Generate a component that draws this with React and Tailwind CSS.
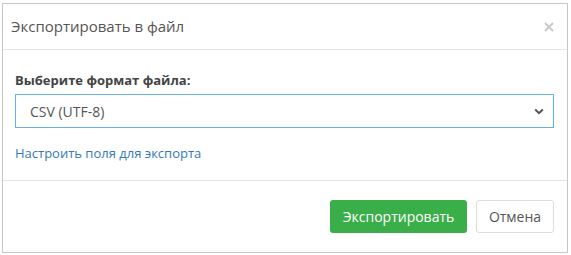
import React from "react";

export default function App() {
  return (
    <div className="w-[571px] h-[255px] bg-white pt-[3px] pl-[2px]" style={{ fontFamily: '"Open Sans", sans-serif' }}>
      <div className="w-[566px] h-[250px] border border-[#c6c6c6] flex flex-col bg-white">
        <div className="h-[46px] flex items-center justify-between pl-[8px] pr-[12px] border-b border-[#e5e5e5]">
          <div className="text-[15px] text-[#555]">Экспортировать в файл</div>
          <svg width="10" height="10" viewBox="0 0 10 10" className="mr-[1px]">
            <path d="M1 1L9 9M9 1L1 9" stroke="#c8c8c8" strokeWidth="1.8" />
          </svg>
        </div>
        <div className="flex-1 px-[12px] pt-[20px] border-b border-[#e5e5e5]">
          <div className="text-[13px] font-bold text-[#444] leading-[20px]">Выберите формат файла:</div>
          <div className="mt-[4px] h-[34px] w-[539px] border border-[#66afe9] flex items-center justify-between pl-[14px] pr-[9px]">
            <span className="text-[14px] text-[#555]">CSV (UTF-8)</span>
            <svg width="10" height="7" viewBox="0 0 10 7">
              <path d="M1.2 1.5L5 5.2L8.8 1.5" stroke="#555" strokeWidth="2" fill="none" />
            </svg>
          </div>
          <div className="mt-[15px] text-[13px] text-[#337ab7] leading-[20px]">Настроить поля для экспорта</div>
        </div>
        <div className="h-[71px] flex items-center justify-end gap-[9px] pr-[13px] pb-[1px]">
          <button className="h-[33px] w-[137px] rounded-[3px] bg-[#3aae49] text-white text-[14px]">Экспортировать</button>
          <button className="h-[33px] w-[78px] rounded-[3px] border border-[#ddd] bg-white text-[#555] text-[14px]">Отмена</button>
        </div>
      </div>
    </div>
  );
}
